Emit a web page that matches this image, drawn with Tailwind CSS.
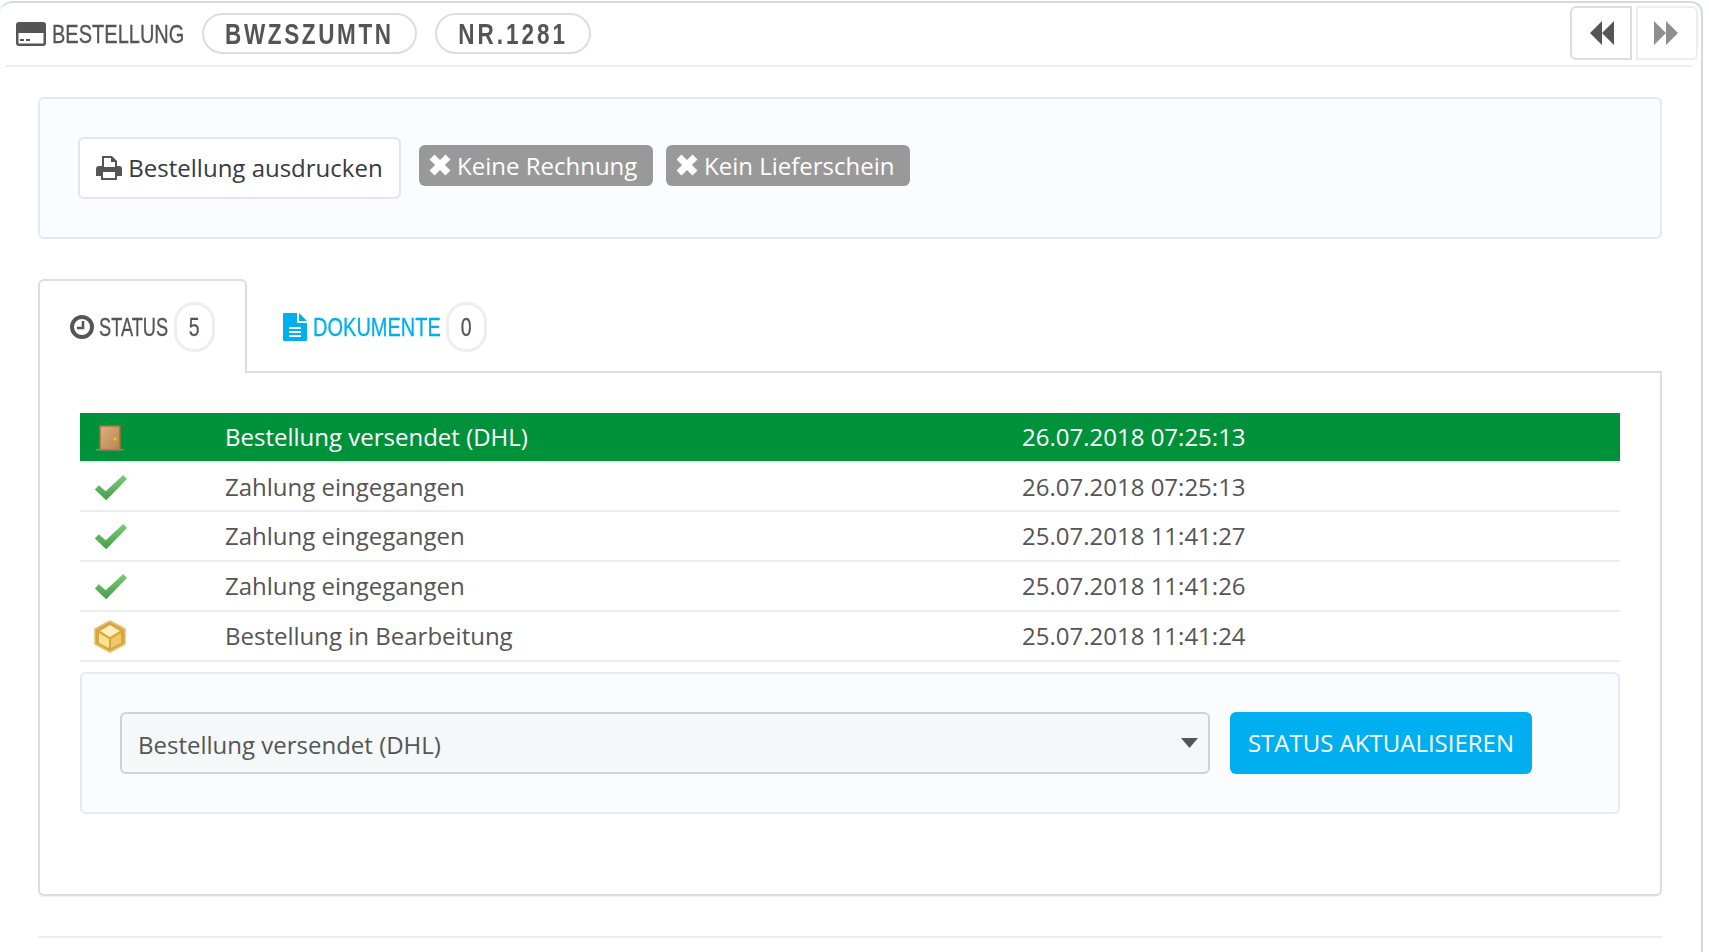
<!DOCTYPE html>
<html lang="de">
<head>
    <meta charset="UTF-8">
    <title>Bestellung</title>
    <script src="https://cdn.jsdelivr.net/npm/@tailwindcss/browser@4"></script>
</head>
<body class="bg-white overflow-hidden font-['Open_Sans',sans-serif] text-[#555]">
<div class="w-[1703px] h-[951px] mt-px border-t-2 border-r-2 border-[#d5dadc] rounded-t-xl">

    <!-- header -->
    <div class="flex items-center ml-[6px] mr-[8px] h-[64px] border-b-2 border-[#eeeeee] pl-[10px]">
        <svg class="w-[30px] h-[24px] shrink-0" viewBox="0 0 30 24"><path fill="#555" fill-rule="evenodd" d="M3 0h24a3 3 0 0 1 3 3v18a3 3 0 0 1-3 3H3a3 3 0 0 1-3-3V3a3 3 0 0 1 3-3zm-.5 11v10.500h25V11zM4 17h4v2H4zm6 0h4v2h-4z"/></svg>
        <span class="ml-[6px] w-[131px] whitespace-nowrap text-[26px] leading-none font-['Liberation_Sans',sans-serif] origin-left scale-x-[0.77] [-webkit-text-stroke:0.3px_#555]">BESTELLUNG</span>
        <span class="ml-[19px] -mt-[2px] w-[215px] h-[41px] flex items-center justify-center rounded-full border-2 border-[#dddddd] text-[30px] font-bold font-['Liberation_Sans',sans-serif]"><span class="inline-block whitespace-nowrap tracking-[3.5px] scale-x-[0.75]">BWZSZUMTN</span></span>
        <span class="ml-[18px] -mt-[2px] w-[156px] h-[41px] flex items-center justify-center rounded-full border-2 border-[#dddddd] text-[30px] font-bold font-['Liberation_Sans',sans-serif]"><span class="inline-block whitespace-nowrap tracking-[4px] scale-x-[0.75]">NR.1281</span></span>
        <div class="ml-auto -mr-[5px] flex gap-[4px] -mt-[3px]">
            <button class="w-[62px] h-[54px] flex items-center justify-center border-2 border-[#dddddd] rounded-l-md">
                <svg class="w-[24px] h-[24px] ml-[1px]" viewBox="0 0 24 24"><path fill="#555" d="M0 12 12 0v24zM12 12 24 0v24z"/></svg>
            </button>
            <button class="w-[62px] h-[54px] flex items-center justify-center border-2 border-[#eeeeee] rounded-r-md">
                <svg class="w-[24px] h-[24px] -ml-[2px]" viewBox="0 0 24 24"><path fill="#8f8f8f" d="M24 12 12 0v24zM12 12 0 0v24z"/></svg>
            </button>
        </div>
    </div>

    <div class="ml-[38px] w-[1624px]">
        <!-- actions panel -->
        <div class="mt-[30px] h-[142px] rounded-md border-2 border-[#e3eaf5] bg-[#fbfcff] flex items-center pl-[38px]">
            <button class="w-[323px] h-[62px] flex items-center justify-center gap-[6px] bg-white border-2 border-[#e3e5e7] rounded-md text-[24px] text-[#363a41]">
                <svg class="w-[26px] h-[24px]" viewBox="0 0 26 24"><path fill="#555" fill-rule="evenodd" d="M6 0h10l5 5v5h2a3 3 0 0 1 3 3v7h-5v4H5v-4H0v-7a3 3 0 0 1 3-3h3zm2 2v9h11V6h-4V2zM7 16v6h12v-6z"/></svg>
                Bestellung ausdrucken
            </button>
            <span class="ml-[18px] -mt-[6px] w-[234px] h-[41px] flex items-center pl-[10px] gap-[6px] bg-[#999999] rounded-md text-[24px] text-white">
                <svg class="w-[22px] h-[22px]" viewBox="0 0 20 20"><path fill="#fff" d="M5 .5 10 5.500 15 .5 19.500 5 14.500 10l5 5-4.500 4.500-5-5-5 5L.5 15l5-5-5-5z"/></svg>
                <span class="mt-[1px]">Keine Rechnung</span>
            </span>
            <span class="ml-[13px] -mt-[6px] w-[244px] h-[41px] flex items-center pl-[10px] gap-[6px] bg-[#999999] rounded-md text-[24px] text-white">
                <svg class="w-[22px] h-[22px]" viewBox="0 0 20 20"><path fill="#fff" d="M5 .5 10 5.500 15 .5 19.500 5 14.500 10l5 5-4.500 4.500-5-5-5 5L.5 15l5-5-5-5z"/></svg>
                <span class="mt-[1px]">Kein Lieferschein</span>
            </span>
        </div>

        <!-- tabs -->
        <div class="mt-[40px] flex h-[94px] border-b-2 border-[#dddddd] font-['Liberation_Sans',sans-serif] text-[26px]">
            <div class="w-[209px] h-[94px] flex items-center pl-[30px] bg-white border-2 border-b-0 border-[#dddddd] rounded-t-md">
                <svg class="w-[24px] h-[24px] shrink-0" viewBox="0 0 24 24"><circle cx="12" cy="12" r="10" fill="none" stroke="#555" stroke-width="4"/><path fill="none" stroke="#555" stroke-width="2.500" d="M13 6v7H7"/></svg>
                <span class="ml-[5px] w-[75px] whitespace-nowrap origin-left scale-x-[0.70] [-webkit-text-stroke:0.3px_#555]">STATUS</span>
                <span class="w-[41px] h-[50px] flex items-center justify-center border-[3px] border-[#eeeeee] rounded-[20px]"><span class="inline-block scale-x-[0.75] [-webkit-text-stroke:0.3px_#555]">5</span></span>
            </div>
            <div class="flex items-center pl-[36px] pt-[4px] text-[#00aff0]">
                <svg class="w-[24px] h-[28px] shrink-0" viewBox="0 0 24 28"><path fill="#00aff0" fill-rule="evenodd" d="M1 0h13v9a1 1 0 0 0 1 1h9v17a1 1 0 0 1-1 1H1a1 1 0 0 1-1-1V1a1 1 0 0 1 1-1zm15 0 8 8h-8zM6 14v2h12v-2zm0 4v2h12v-2zm0 4v2h12v-2z"/></svg>
                <span class="ml-[6px] w-[133px] whitespace-nowrap origin-left scale-x-[0.77] [-webkit-text-stroke:0.3px_#00aff0]">DOKUMENTE</span>
                <span class="w-[41px] h-[50px] flex items-center justify-center border-[3px] border-[#eeeeee] rounded-[20px] text-[#555]"><span class="inline-block scale-x-[0.75] [-webkit-text-stroke:0.3px_#555]">0</span></span>
            </div>
        </div>

        <!-- status card -->
        <div class="h-[523px] border-2 border-t-0 border-[#dddddd] rounded-b-md px-[40px] pt-[40px] shadow-[0_1px_1px_rgba(0,0,0,0.06)]">
            <table class="w-[1540px] text-[24px] border-collapse">
                <tbody>
                    <tr class="h-[49px] bg-[#00923b] text-white border-b-2 border-[#e9edf1]">
                        <td class="w-[145px] pl-[16px]">
                            <svg class="w-[28px] h-[26px] mt-[2px] blur-[0.4px]" viewBox="0 0 28 26">
                                <defs><linearGradient id="door" x1="0" x2="1" y1="0" y2="1"><stop offset="0" stop-color="#dcb184"/><stop offset="1" stop-color="#b9824e"/></linearGradient></defs>
                                <rect x="4" y="1" width="20" height="24" fill="url(#door)" stroke="#a66f3a" stroke-width="1.500"/>
                                <circle cx="19" cy="14" r="1.500" fill="#f2c230"/>
                                <rect x="0" y="24" width="28" height="1.500" fill="#6f8f7a"/>
                            </svg>
                        </td>
                        <td class="w-[797px]">Bestellung versendet (DHL)</td>
                        <td>26.07.2018 07:25:13</td>
                    </tr>
                    <tr class="h-[49px] border-b-2 border-[#e9edf1]">
                        <td class="pl-[14px]">
                            <svg class="w-[34px] h-[28px] mt-[2px] blur-[0.4px]" viewBox="0 0 32 26"><defs><linearGradient id="chk" x1="0" x2="0" y1="0" y2="1"><stop offset="0" stop-color="#7ccb7c"/><stop offset="1" stop-color="#459e49"/></linearGradient></defs><path fill="url(#chk)" d="M27.500 .8 31 4.500 11.500 24.500 .8 14.500 4.500 10.500 11 16z"/></svg>
                        </td>
                        <td>Zahlung eingegangen</td>
                        <td>26.07.2018 07:25:13</td>
                    </tr>
                    <tr class="h-[50px] border-b-2 border-[#e9edf1]">
                        <td class="pl-[14px]">
                            <svg class="w-[34px] h-[28px] mt-[2px] blur-[0.4px]" viewBox="0 0 32 26"><path fill="url(#chk)" d="M27.500 .8 31 4.500 11.500 24.500 .8 14.500 4.500 10.500 11 16z"/></svg>
                        </td>
                        <td>Zahlung eingegangen</td>
                        <td>25.07.2018 11:41:27</td>
                    </tr>
                    <tr class="h-[50px] border-b-2 border-[#e9edf1]">
                        <td class="pl-[14px]">
                            <svg class="w-[34px] h-[28px] mt-[2px] blur-[0.4px]" viewBox="0 0 32 26"><path fill="url(#chk)" d="M27.500 .8 31 4.500 11.500 24.500 .8 14.500 4.500 10.500 11 16z"/></svg>
                        </td>
                        <td>Zahlung eingegangen</td>
                        <td>25.07.2018 11:41:26</td>
                    </tr>
                    <tr class="h-[50px] border-b-2 border-[#e9edf1]">
                        <td class="pl-[13px]">
                            <svg class="w-[34px] h-[33px] blur-[0.4px]" viewBox="0 0 34 33">
                                <path fill="#d7a640" stroke="#e7c06a" stroke-width="1.500" stroke-linejoin="round" d="M17 1 32 9v15l-15 8-15-8V9z"/>
                                <path fill="#fdf0bd" d="M17 5 27 11 17 17 7 11z"/>
                                <path fill="#fbe08e" d="M6 13l10 6v9l-10-5z"/>
                                <path fill="#f1c867" d="M28 13l-10 6v9l10-5z"/>
                            </svg>
                        </td>
                        <td>Bestellung in Bearbeitung</td>
                        <td>25.07.2018 11:41:24</td>
                    </tr>
                </tbody>
            </table>

            <!-- status form -->
            <div class="w-[1540px] mt-[10px] h-[142px] rounded-md border-2 border-[#e3eaf5] bg-[#fbfcff] flex items-start pt-[38px] pl-[38px]">
                <div class="w-[1090px] h-[62px] flex items-center justify-between bg-[#f5f8f9] border-2 border-[#c7d6db] rounded-md pl-[16px] pr-[10px] pt-[3px] text-[24px]">
                    <span>Bestellung versendet (DHL)</span>
                    <svg class="w-[17px] h-[10px] mt-[-4px]" viewBox="0 0 17 10"><path fill="#555" d="M0 0h17l-8.500 10z"/></svg>
                </div>
                <button class="ml-[20px] w-[302px] h-[62px] flex items-center justify-center bg-[#00aff0] rounded-md text-white text-[24px]">STATUS AKTUALISIEREN</button>
            </div>
        </div>

        <div class="mt-[40px] border-t-2 border-[#eeeeee]"></div>
    </div>
</div>
</body>
</html>
